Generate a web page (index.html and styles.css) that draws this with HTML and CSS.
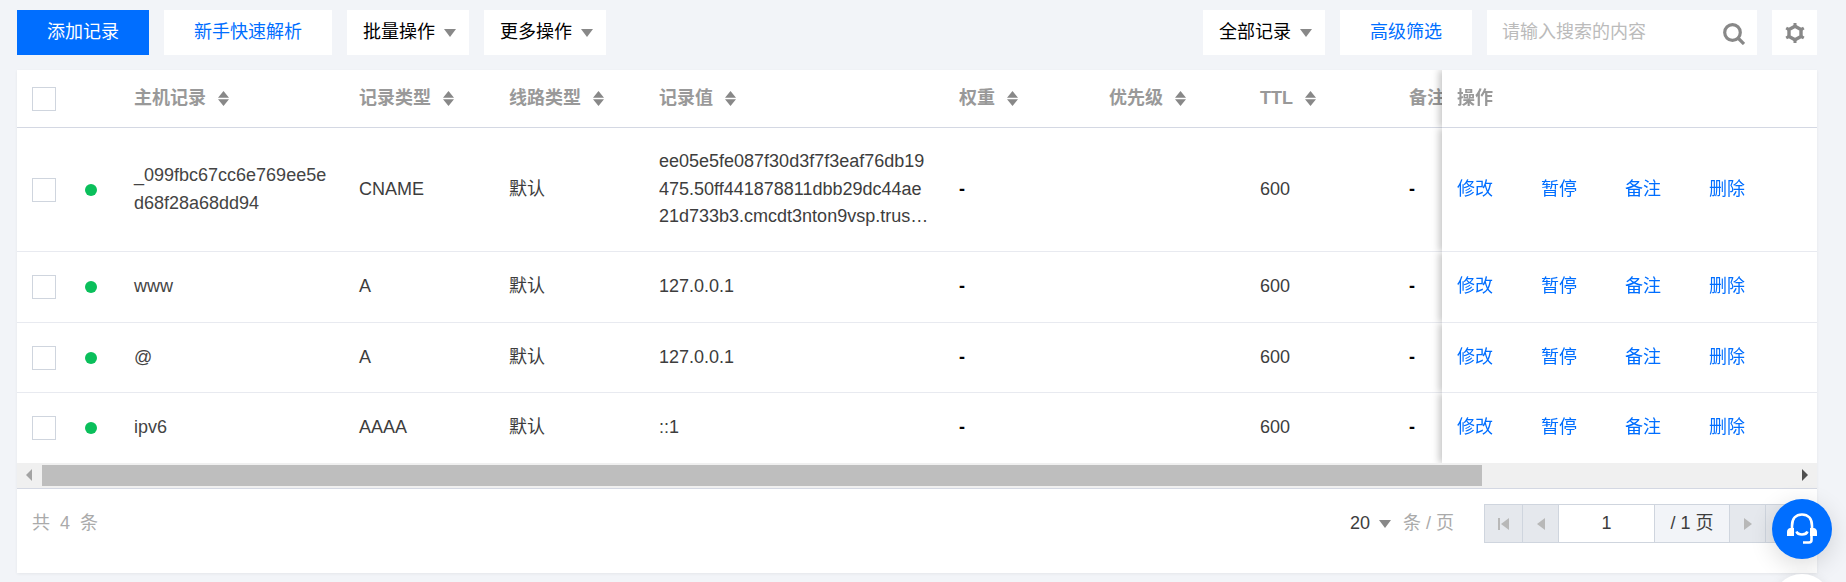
FILE: index.html
```html
<!DOCTYPE html>
<html lang="zh-CN">
<head>
    <meta charset="UTF-8">
    <title>记录管理</title>
    <link rel="stylesheet" href="styles.css">
</head>
<body>
    <div class="toolbar">
        <a class="btn btn-primary btn-add">添加记录</a>
        <a class="btn btn-link btn-guide">新手快速解析</a>
        <a class="btn btn-drop">批量操作<i class="caret"></i></a>
        <a class="btn btn-drop">更多操作<i class="caret"></i></a>
        <div class="spacer"></div>
        <a class="btn btn-drop">全部记录<i class="caret"></i></a>
        <a class="btn btn-link btn-filter">高级筛选</a>
        <div class="search">
            <span class="placeholder">请输入搜索的内容</span>
            <svg class="search-icon" viewBox="0 0 22 22"><circle cx="9.5" cy="9.5" r="7.8"/><path d="M15 15L21 21"/></svg>
        </div>
        <a class="btn btn-gear">
            <svg class="gear-icon" viewBox="0 0 20 20"><path class="gear-ring" d="M10 3.2L16 6.6V13.4L10 16.8L4 13.4V6.6Z"/><path class="gear-teeth" d="M10 0V3.2M18.8 5L16 6.6M18.8 15L16 13.4M10 20V16.8M1.2 15L4 13.4M1.2 5L4 6.6"/></svg>
        </a>
    </div>

    <div class="card">
        <div class="table-wrap">
            <table class="records">
                <colgroup>
                    <col class="c-check"><col class="c-dot"><col class="c-host"><col class="c-150"><col class="c-150"><col class="c-value"><col class="c-150"><col class="c-pri"><col class="c-ttl"><col class="c-150"><col class="c-ops">
                </colgroup>
                <thead>
                    <tr>
                        <th><span class="check"></span></th>
                        <th></th>
                        <th>主机记录<svg class="sort" viewBox="0 0 11 15"><path d="M5.5 0L11 6.8H0ZM5.5 15L0 8.2H11Z"/></svg></th>
                        <th>记录类型<svg class="sort" viewBox="0 0 11 15"><path d="M5.5 0L11 6.8H0ZM5.5 15L0 8.2H11Z"/></svg></th>
                        <th>线路类型<svg class="sort" viewBox="0 0 11 15"><path d="M5.5 0L11 6.8H0ZM5.5 15L0 8.2H11Z"/></svg></th>
                        <th>记录值<svg class="sort" viewBox="0 0 11 15"><path d="M5.5 0L11 6.8H0ZM5.5 15L0 8.2H11Z"/></svg></th>
                        <th>权重<svg class="sort" viewBox="0 0 11 15"><path d="M5.5 0L11 6.8H0ZM5.5 15L0 8.2H11Z"/></svg></th>
                        <th>优先级<svg class="sort" viewBox="0 0 11 15"><path d="M5.5 0L11 6.8H0ZM5.5 15L0 8.2H11Z"/></svg></th>
                        <th>TTL<svg class="sort" viewBox="0 0 11 15"><path d="M5.5 0L11 6.8H0ZM5.5 15L0 8.2H11Z"/></svg></th>
                        <th>备注</th>
                        <th class="ops">操作</th>
                    </tr>
                </thead>
                <tbody>
                    <tr class="tall">
                        <td><span class="check"></span></td>
                        <td><span class="dot"></span></td>
                        <td class="host">_099fbc67cc6e769ee5ed68f28a68dd94</td>
                        <td>CNAME</td>
                        <td>默认</td>
                        <td><div class="value">ee05e5fe087f30d3f7f3eaf76db19475.50ff441878811dbb29dc44ae21d733b3.cmcdt3nton9vsp.trustasiassl.com</div></td>
                        <td class="dash">-</td>
                        <td></td>
                        <td>600</td>
                        <td class="dash">-</td>
                        <td class="ops"><div class="links"><a>修改</a><a>暂停</a><a>备注</a><a>删除</a></div></td>
                    </tr>
                    <tr class="second">
                        <td><span class="check"></span></td>
                        <td><span class="dot"></span></td>
                        <td class="host">www</td>
                        <td>A</td>
                        <td>默认</td>
                        <td>127.0.0.1</td>
                        <td class="dash">-</td>
                        <td></td>
                        <td>600</td>
                        <td class="dash">-</td>
                        <td class="ops"><div class="links"><a>修改</a><a>暂停</a><a>备注</a><a>删除</a></div></td>
                    </tr>
                    <tr>
                        <td><span class="check"></span></td>
                        <td><span class="dot"></span></td>
                        <td class="host">@</td>
                        <td>A</td>
                        <td>默认</td>
                        <td>127.0.0.1</td>
                        <td class="dash">-</td>
                        <td></td>
                        <td>600</td>
                        <td class="dash">-</td>
                        <td class="ops"><div class="links"><a>修改</a><a>暂停</a><a>备注</a><a>删除</a></div></td>
                    </tr>
                    <tr class="last">
                        <td><span class="check"></span></td>
                        <td><span class="dot"></span></td>
                        <td class="host">ipv6</td>
                        <td>AAAA</td>
                        <td>默认</td>
                        <td>::1</td>
                        <td class="dash">-</td>
                        <td></td>
                        <td>600</td>
                        <td class="dash">-</td>
                        <td class="ops"><div class="links"><a>修改</a><a>暂停</a><a>备注</a><a>删除</a></div></td>
                    </tr>
                </tbody>
            </table>
        </div>

        <div class="scrollbar">
            <i class="arrow-left"></i>
            <div class="thumb"></div>
            <i class="arrow-right"></i>
        </div>

        <div class="footer">
            <span class="total">共 4 条</span>
            <span class="size">20<i class="caret"></i></span>
            <span class="size-unit">条 / 页</span>
            <div class="pager">
                <span class="pg pg-btn"><i class="bar"></i><i class="tri-left"></i></span>
                <span class="pg pg-btn"><i class="tri-left"></i></span>
                <span class="pg pg-input">1</span>
                <span class="pg pg-count">/ 1 页</span>
                <span class="pg pg-btn"><i class="tri-right"></i></span>
                <span class="pg pg-btn"><i class="tri-right"></i></span>
            </div>
        </div>
    </div>

    <div class="float-help">
        <svg viewBox="0 0 60 60"><path class="hs-line" d="M20 31V27C20 19.5 24 15.5 30 15.5C36 15.5 40 19.5 40 27V31"/><path class="hs-line" d="M24.5 32.5C26 36.5 34 36.5 35.5 32.5"/><path class="hs-line" d="M39.5 37V41C39.5 43 38.5 43.5 37 43.5H31"/><path class="hs-pad" d="M15 37V33C15 31 16 29.5 18 29H22V37ZM38 29H42C44 29.5 45 31 45 33V37H38Z"/></svg>
    </div>
    <div class="float-other"></div>
</body>
</html>
```

FILE: styles.css
```css
html, body {
    height: 100%;
    margin: 0;
    overflow: hidden;
}
body {
    padding: 10px 29px 0 17px;
    box-sizing: border-box;
    background: #f2f4f8;
    color: #3d3d3d;
    font: 18px/27.5px "Liberation Sans", "Noto Sans CJK SC", sans-serif;
}
a {
    cursor: pointer;
}
i {
    display: inline-block;
}

/* toolbar */
.toolbar {
    display: flex;
    gap: 15px;
    height: 45px;
    margin-bottom: 15px;
}
.spacer {
    flex: 1;
}
.btn {
    display: flex;
    align-items: center;
    justify-content: center;
    background: #fff;
    color: #000;
}
.btn-primary {
    background: #006eff;
    color: #fff;
}
.btn-link {
    color: #006eff;
}
.btn-add {
    width: 132px;
}
.btn-guide {
    width: 168px;
}
.btn-filter {
    width: 132px;
}
.btn-drop {
    justify-content: flex-start;
    box-sizing: border-box;
    width: 122px;
    padding-left: 16px;
}
.btn-gear {
    width: 45px;
}
.caret {
    width: 0;
    height: 0;
    margin-left: 9px;
    border-left: 6px solid transparent;
    border-right: 6px solid transparent;
    border-top: 8px solid #888;
}
.search {
    display: flex;
    align-items: center;
    justify-content: space-between;
    box-sizing: border-box;
    width: 270px;
    padding: 0 12px 0 15px;
    background: #fff;
}
.placeholder {
    color: #bbb;
}
.search-icon {
    width: 22px;
    height: 22px;
    margin-top: 2px;
    fill: none;
    stroke: #888;
    stroke-width: 3.2;
}
.gear-icon {
    width: 20px;
    height: 20px;
    fill: none;
    stroke: #888;
}
.gear-ring {
    stroke-width: 3.4;
}
.gear-teeth {
    stroke-width: 3;
}

/* table */
.card {
    background: #fff;
    box-shadow: 0 1px 3px rgba(0, 0, 0, 0.06);
}
.table-wrap {
    overflow: hidden;
}
.records {
    width: 1902px;
    table-layout: fixed;
    border-collapse: separate;
    border-spacing: 0;
}
.c-check { width: 53px; }
.c-dot { width: 49px; }
.c-host { width: 225px; }
.c-150 { width: 150px; }
.c-value { width: 300px; }
.c-pri { width: 151px; }
.c-ttl { width: 149px; }
.c-ops { width: 375px; }
.records th,
.records td {
    box-sizing: border-box;
    padding: 0 15px;
    text-align: left;
    vertical-align: middle;
}
.records th {
    height: 58px;
    border-bottom: 1px solid #d4d8e3;
    color: #999;
    font-weight: bold;
    white-space: nowrap;
}
.records td {
    height: 70px;
    border-bottom: 1px solid #e8eaf0;
}
.records .tall td {
    height: 124px;
}
.records .second td {
    height: 71px;
}
.records .last td {
    height: 70px;
    border-bottom: 0;
}
.records .ops {
    position: sticky;
    right: 0;
    background: #fff;
    box-shadow: -3px 0 7px rgba(0, 0, 0, 0.22);
    clip-path: inset(0 0 0 -12px);
}
.sort {
    width: 11px;
    height: 15px;
    margin-left: 12px;
    vertical-align: -2px;
    fill: #888;
}
.check {
    display: block;
    box-sizing: border-box;
    width: 24px;
    height: 24px;
    border: 1px solid #cfd5de;
    background: #fff;
}
.dot {
    display: block;
    width: 12px;
    height: 12px;
    border-radius: 50%;
    background: #0abf5b;
}
.host {
    color: #444;
    word-break: break-all;
}
.value {
    display: -webkit-box;
    overflow: hidden;
    word-break: break-all;
    -webkit-box-orient: vertical;
    -webkit-line-clamp: 3;
}
.dash {
    color: #000;
    font-weight: bold;
}
.links {
    display: flex;
}
.links a {
    width: 84px;
    color: #006eff;
}

/* fake horizontal scrollbar */
.scrollbar {
    display: flex;
    align-items: center;
    box-sizing: border-box;
    height: 26px;
    padding-bottom: 1px;
    border-bottom: 1px solid #d4d8e3;
    background: #f0f0f0;
}
.arrow-left {
    width: 0;
    height: 0;
    margin: 0 10px 0 9px;
    border-top: 6px solid transparent;
    border-bottom: 6px solid transparent;
    border-right: 6px solid #a3a3a3;
}
.thumb {
    width: 1440px;
    height: 21px;
    background: #bebebe;
}
.arrow-right {
    width: 0;
    height: 0;
    margin-left: auto;
    margin-right: 9px;
    border-top: 6px solid transparent;
    border-bottom: 6px solid transparent;
    border-left: 6px solid #505050;
}

/* footer */
.footer {
    display: flex;
    align-items: center;
    height: 39px;
    padding: 15px 15px 30px;
}
.total {
    margin-right: auto;
    color: #aaa;
    word-spacing: 5px;
}
.size {
    display: flex;
    align-items: center;
    color: #3d3d3d;
}
.size-unit {
    margin: 0 30px 0 12px;
    color: #aaa;
}
.pager {
    display: flex;
    height: 39px;
    box-sizing: border-box;
    border: 1px solid #cfd5de;
}
.pg {
    display: flex;
    align-items: center;
    justify-content: center;
    box-sizing: border-box;
    border-left: 1px solid #cfd5de;
}
.pg:first-child {
    width: 37px;
    border-left: 0;
}
.pg-btn {
    width: 36px;
    background: #e5e8ed;
}
.pg-input {
    width: 96px;
    background: #fff;
}
.pg-count {
    width: 75px;
    background: #f2f4f8;
}
.tri-left {
    width: 0;
    height: 0;
    border-top: 6px solid transparent;
    border-bottom: 6px solid transparent;
    border-right: 8px solid #b8b8b8;
}
.tri-right {
    width: 0;
    height: 0;
    border-top: 6px solid transparent;
    border-bottom: 6px solid transparent;
    border-left: 8px solid #b8b8b8;
}
.bar {
    width: 2px;
    height: 12px;
    margin-right: 1px;
    background: #b8b8b8;
}

/* floating buttons */
.float-help,
.float-other {
    position: absolute;
    left: 1772px;
    width: 60px;
    height: 60px;
    border-radius: 50%;
}
.float-help {
    top: 499px;
    background: #006eff;
    box-shadow: 0 6px 24px rgba(0, 0, 0, 0.14);
}
.float-help svg {
    display: block;
}
.hs-line {
    fill: none;
    stroke: #fff;
    stroke-width: 2.6;
}
.hs-pad {
    fill: #fff;
}
.float-other {
    top: 574px;
    background: #fff;
    box-shadow: 0 2px 12px rgba(0, 0, 0, 0.08);
}
```
